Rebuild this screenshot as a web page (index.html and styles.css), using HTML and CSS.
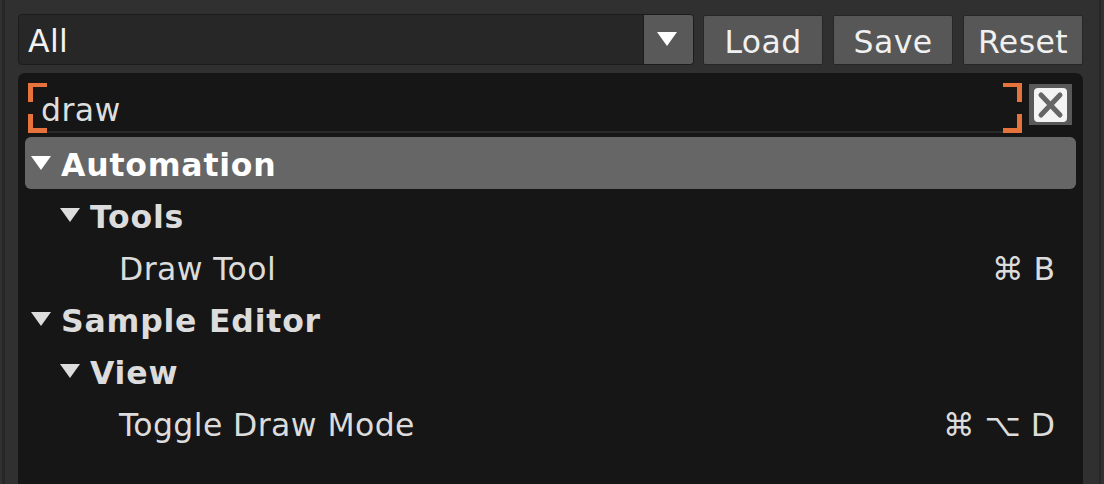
FILE: index.html
```html
<!DOCTYPE html>
<html lang="en">
<head>
    <meta charset="UTF-8">
    <title>Shortcuts</title>
    <link rel="stylesheet" href="styles.css">
</head>
<body>

<div class="app">
    <div class="toolbar">
        <div class="combo">
            <span class="combo-value">All</span>
            <span class="combo-arrow">
                <svg width="20" height="15" viewBox="0 0 20 15"><polygon points="0,0 20,0 10,14" fill="#fff"/></svg>
            </span>
        </div>
        <button class="btn">Load</button>
        <button class="btn">Save</button>
        <button class="btn">Reset</button>
    </div>

    <div class="panel">
        <div class="search">
            <div class="search-field">
                <span class="corner tl"></span>
                <span class="corner bl"></span>
                <span class="corner tr"></span>
                <span class="corner br"></span>
                <span class="search-text">draw</span>
            </div>
            <button class="clear">
                <svg width="33" height="34" viewBox="0 0 33 34">
                    <rect x="0" y="0" width="33" height="34" rx="4" fill="#f4f4f4"/>
                    <path d="M7 7 L26 27 M26 7 L7 27" stroke="#666" stroke-width="5" stroke-linecap="round"/>
                </svg>
            </button>
        </div>

        <ul class="tree">
            <li class="row group lvl1 selected">
                <svg class="caret" width="22" height="16" viewBox="0 0 22 16"><polygon points="1,1 21,1 11,15" fill="#fff"/></svg>
                <span class="label">Automation</span>
            </li>
            <li class="row group lvl2">
                <svg class="caret" width="22" height="16" viewBox="0 0 22 16"><polygon points="1,1 21,1 11,15" fill="#ddd"/></svg>
                <span class="label">Tools</span>
            </li>
            <li class="row item lvl3">
                <span class="label">Draw Tool</span>
                <span class="keys">⌘ B</span>
            </li>
            <li class="row group lvl1">
                <svg class="caret" width="22" height="16" viewBox="0 0 22 16"><polygon points="1,1 21,1 11,15" fill="#ddd"/></svg>
                <span class="label">Sample Editor</span>
            </li>
            <li class="row group lvl2">
                <svg class="caret" width="22" height="16" viewBox="0 0 22 16"><polygon points="1,1 21,1 11,15" fill="#ddd"/></svg>
                <span class="label">View</span>
            </li>
            <li class="row item lvl3">
                <span class="label">Toggle Draw Mode</span>
                <span class="keys">⌘ ⌥ D</span>
            </li>
        </ul>
    </div>
</div>

</body>
</html>
```

FILE: styles.css
```css
* {
    box-sizing: border-box;
    font-family: 'DejaVu Sans', 'Liberation Sans', sans-serif;
}

body {
    margin: 0;
    padding: 0;
    background-color: #323232;
    height: 100vh;
    overflow: hidden;
}

.app {
    display: flex;
    flex-direction: column;
    height: 484px;
    margin: 0 3px 0 2px;
    border-left: 3px solid #272727;
    border-right: 2px solid #272727;
    padding: 14px 16px 0 13px;
    background-color: #303030;
}

/* top bar */
.toolbar {
    display: flex;
    gap: 10px;
    height: 51px;
}
.combo {
    flex-grow: 1;
    display: flex;
    align-items: stretch;
    background-color: #272727;
    border: 1px solid #1c1c1c;
    border-radius: 4px;
    overflow: hidden;
}
.combo-value {
    flex-grow: 1;
    display: flex;
    align-items: center;
    padding: 3px 0 0 9px;
    font-size: 31.5px;
    letter-spacing: 0.4px;
    color: #f2f2f2;
}
.combo-arrow {
    width: 50px;
    display: flex;
    align-items: center;
    justify-content: center;
    padding-right: 3px;
    background-color: #595959;
    border-left: 1px solid #1c1c1c;
}
.btn {
    width: 120px;
    margin-top: 1px;
    padding: 3px 0 0 0;
    font-size: 31.5px;
    letter-spacing: 0.4px;
    color: #f0f0f0;
    background-color: #575757;
    border: 1px solid #262626;
    border-radius: 2px;
}
.btn:first-of-type {
    margin-left: -1px;
}

/* main list panel */
.panel {
    flex-grow: 1;
    margin-top: 8px;
    padding: 10px 7px;
    background-color: #161616;
    border-radius: 7px 7px 0 0;
}

.search {
    display: flex;
    gap: 7px;
    padding: 0 4px 0 3px;
}
.search-field {
    position: relative;
    flex-grow: 1;
    height: 50px;
    display: flex;
    align-items: center;
    padding: 5px 0 0 13px;
    border-bottom: 2px solid #2a2a2a;
}
.search-text {
    font-size: 31.5px;
    letter-spacing: 0.4px;
    color: #dedede;
}
.corner {
    position: absolute;
    width: 19px;
    height: 19px;
    border: 0 solid #e6723c;
}
.corner.tl { left: 0; top: 0; border-left-width: 5px; border-top-width: 4px; }
.corner.bl { left: 0; bottom: -2px; border-left-width: 5px; border-bottom-width: 5px; }
.corner.tr { right: 0; top: 0; border-right-width: 5px; border-top-width: 4px; }
.corner.br { right: 0; bottom: -2px; border-right-width: 5px; border-bottom-width: 5px; }

.clear {
    width: 43px;
    height: 41px;
    margin-top: 1px;
    padding: 0;
    display: flex;
    align-items: center;
    justify-content: center;
    background-color: #595959;
    border: none;
}

/* tree */
.tree {
    list-style: none;
    margin: 4px 0 0 0;
    padding: 0;
}
.row {
    display: flex;
    align-items: center;
    height: 52px;
    padding-top: 4px;
    padding-right: 21px;
    font-size: 31.5px;
    letter-spacing: 0.4px;
    color: #dcdcdc;
}
.row.selected {
    background-color: #666;
    border-radius: 6px;
    color: #fff;
}
.row.group .label {
    font-weight: bold;
    letter-spacing: 0.8px;
}
.caret {
    margin-right: 9px;
    margin-top: -4px;
}
.lvl1 { padding-left: 5px; }
.lvl2 { padding-left: 34px; }
.lvl3 { padding-left: 94px; }

.keys {
    margin-left: auto;
    letter-spacing: 0;
    color: #dcdcdc;
}
```
